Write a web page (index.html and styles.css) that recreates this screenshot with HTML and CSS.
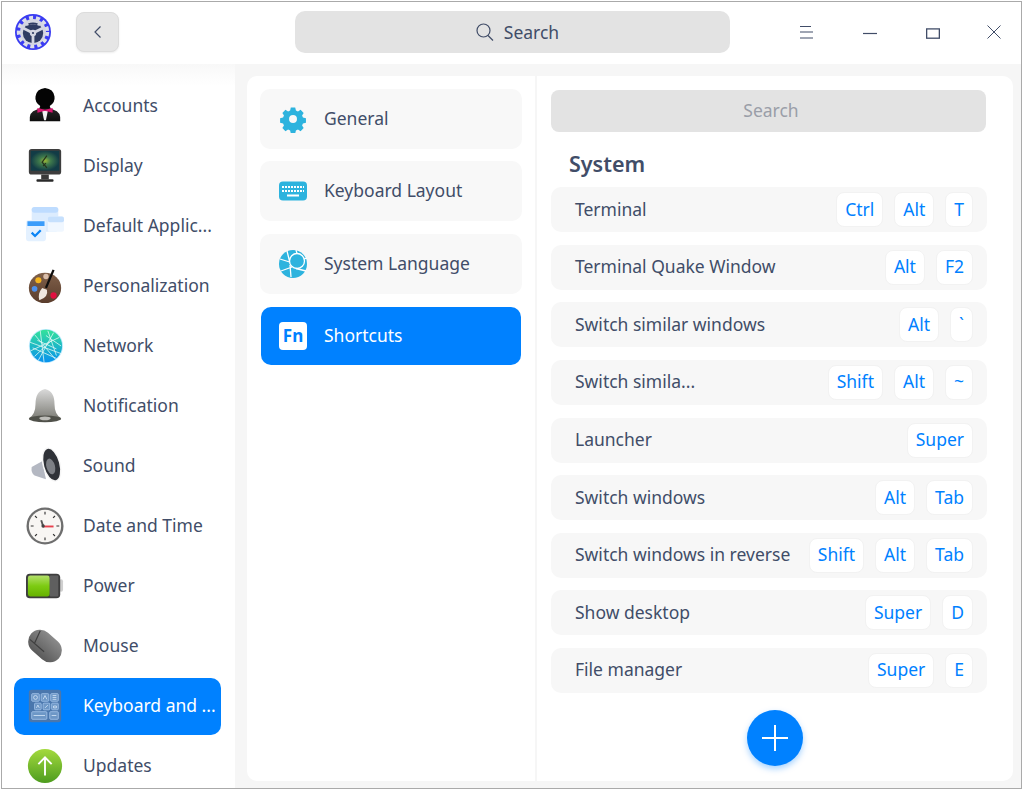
FILE: index.html
```html
<!DOCTYPE html>
<html lang="en">
<head>
<meta charset="utf-8">
<title>Control Center</title>
<link rel="stylesheet" href="styles.css">
</head>
<body>
<div class="window">
  <header class="titlebar">
    <svg class="logo" width="36" height="36" viewBox="0 0 36 36">
      <circle cx="18" cy="18" r="18" fill="#3a3cf2"/>
      <circle cx="18" cy="18" r="14.200" fill="none" stroke="#dcdee8" stroke-width="4" stroke-dasharray="4 2.950"/>
      <circle cx="18" cy="18" r="13" fill="#d4d6e2"/>
      <circle cx="18" cy="19" r="10.200" fill="#2f3c63"/>
      <path d="M18 19 8 14M18 19l10-5M18 19v11" stroke="#d4d6e2" stroke-width="2.800"/>
      <path d="M10 9q8-5 16 0l-1.500 3q-6.500-3.500-13 0z" fill="#d4d6e2"/>
      <path d="M13 9.500q5-2 10 0l-1 1.500q-4-1.400-8 0z" fill="#2f3c63"/>
      <circle cx="18" cy="19" r="3.200" fill="#d4d6e2"/>
      <circle cx="18" cy="19" r="1.100" fill="#2f3c63"/>
    </svg>
    <button class="back" aria-label="Back">
      <svg width="10" height="14" viewBox="0 0 10 14"><path d="M7.500 1.500 2 7l5.500 5.500" fill="none" stroke="#414d68" stroke-width="1.200"/></svg>
    </button>
    <div class="top-search">
      <svg width="20" height="20" viewBox="0 0 20 20"><circle cx="8.500" cy="8.500" r="6.500" fill="none" stroke="#414d68" stroke-width="1.200"/><path d="m13 13.500 5 5" stroke="#414d68" stroke-width="1.200"/></svg>
      <span>Search</span>
    </div>
    <div class="win-buttons">
      <svg width="13" height="14" viewBox="0 0 13 14"><path d="M0 1.500h11M0 7h13M0 13h13" stroke="#414d68" stroke-width="1.200"/></svg>
      <svg width="14" height="14" viewBox="0 0 14 14"><path d="M0 8.500h14" stroke="#414d68" stroke-width="1.200"/></svg>
      <svg width="14" height="14" viewBox="0 0 14 14"><rect x=".650" y="3.900" width="12.700" height="9.300" fill="none" stroke="#414d68" stroke-width="1.300"/></svg>
      <svg width="14" height="14" viewBox="0 0 14 14"><path d="m.5.500 13 13M13.500.500l-13 13" stroke="#414d68" stroke-width="1"/></svg>
    </div>
  </header>
  <div class="body">
    <nav class="sidebar">
      <div class="nav-item">
        <svg class="nav-icon" viewBox="0 0 40 40"><defs><linearGradient id="jk" x1="0" y1="0" x2="0" y2="1"><stop offset="0" stop-color="#2a2a2a"/><stop offset="1" stop-color="#0c0c0c"/></linearGradient></defs><path d="M4 36q-1-10 7-12l7-3h4l7 3q8 2 7 12z" fill="url(#jk)"/><path d="M15 20q-6-4-5-10 1-8 10-9 9 1 10 9 1 6-5 10l1 3h-12z" fill="#040404"/><path d="M17 25h6l-2 10h-2z" fill="#f0f0f0"/><path d="M12 22l8 2 8-2v5l-8-2-8 2z" fill="#d9146f"/></svg>
        <span>Accounts</span>
      </div>
      <div class="nav-item">
        <svg class="nav-icon" viewBox="0 0 40 40"><defs><radialGradient id="scr"><stop offset="0" stop-color="#9cb838"/><stop offset=".4" stop-color="#3f7a4c"/><stop offset="1" stop-color="#123c46"/></radialGradient></defs><rect x="3" y="2" width="34" height="27" rx="3" fill="#3d3d3d"/><rect x="5" y="4" width="30" height="21" fill="url(#scr)"/><path d="M22 9 17 16l5 6M18 20l3-3" fill="none" stroke="#26331d" stroke-width="1.300"/><rect x="16" y="29" width="8" height="5" fill="#3a3a3a"/><rect x="11" y="34" width="18" height="2.500" rx="1" fill="#2a2a2a"/></svg>
        <span>Display</span>
      </div>
      <div class="nav-item">
        <svg class="nav-icon" viewBox="0 0 40 40"><rect x="6" y="0" width="28" height="26" rx="3" fill="#dcecfe"/><rect x="6" y="0" width="28" height="6" rx="3" fill="#bedcff"/><rect x="23" y="10" width="17" height="16" rx="2" fill="#f0f7ff"/><rect x="23" y="10" width="17" height="6" rx="2" fill="#c6e0fd"/><rect x="0" y="14" width="21" height="22" rx="2.500" fill="#e4f1ff"/><rect x="1.500" y="15" width="18" height="5" fill="#3a9cfa"/><path d="M6 27l3.500 3.500L15.500 24.500" fill="none" stroke="#0b84f5" stroke-width="2.400"/></svg>
        <span>Default Applic...</span>
      </div>
      <div class="nav-item">
        <svg class="nav-icon" viewBox="0 0 40 40"><defs><linearGradient id="pal" x1="0" y1="0" x2="0" y2="1"><stop offset="0" stop-color="#80604a"/><stop offset="1" stop-color="#5a3d2c"/></linearGradient></defs><ellipse cx="20" cy="22" rx="17" ry="16" fill="url(#pal)"/><circle cx="13" cy="14" r="3.200" fill="#f3b31e"/><circle cx="21" cy="10" r="2.800" fill="#d9bda9"/><circle cx="9" cy="23" r="3" fill="#4d90ea"/><circle cx="29" cy="30" r="3.300" fill="#e01040"/><path d="M14 35q-2-7 3-13l5 2q2 8-8 11z" fill="#efe8e0"/><path d="M21 22 29 3" stroke="#0d0d0d" stroke-width="2.400"/></svg>
        <span>Personalization</span>
      </div>
      <div class="nav-item">
        <svg class="nav-icon" viewBox="0 0 40 40"><defs><linearGradient id="net" x1="0" y1="0" x2="0" y2="1"><stop offset="0" stop-color="#34e29a"/><stop offset="1" stop-color="#0892ee"/></linearGradient></defs><circle cx="21" cy="20" r="18" fill="#bfeaff"/><circle cx="21" cy="20" r="17" fill="url(#net)"/><path d="M9 8 31 34M5 25 35 11M15 4l4 33M29 6 13 35M4 16l33 12M21 9l16 11M9 31 27 14M12 14l20 9M23 4l9 26M7 22l25 11" stroke="#e8fbf6" stroke-width=".8" fill="none"/></svg>
        <span>Network</span>
      </div>
      <div class="nav-item">
        <svg class="nav-icon" viewBox="0 0 40 40"><defs><linearGradient id="bell" x1="0" y1="0" x2="0" y2="1"><stop offset="0" stop-color="#dadada"/><stop offset="1" stop-color="#7f7f78"/></linearGradient></defs><path d="M3 33q7-4 7-15 0-14 10-16 10 2 10 16 0 11 7 15z" fill="url(#bell)"/><ellipse cx="20" cy="33.500" rx="17" ry="3.500" fill="#50514a"/><ellipse cx="20" cy="33" rx="6" ry="2" fill="#bdbdb8"/></svg>
        <span>Notification</span>
      </div>
      <div class="nav-item">
        <svg class="nav-icon" viewBox="0 0 40 40"><path d="M17 15 6 21q-1 6 3 9l12 4z" fill="#b4b8c2"/><ellipse cx="27" cy="18.500" rx="9.500" ry="18.500" transform="rotate(-15 27 18.500)" fill="#f6f6f6"/><ellipse cx="27" cy="18.500" rx="8" ry="17" transform="rotate(-15 27 18.500)" fill="#2f3238"/><ellipse cx="26" cy="20.500" rx="4.500" ry="8.500" transform="rotate(-15 26 20.500)" fill="#7c7f85"/></svg>
        <span>Sound</span>
      </div>
      <div class="nav-item">
        <svg class="nav-icon" viewBox="0 0 40 40"><circle cx="20" cy="20" r="19.500" fill="#6e6e6e"/><circle cx="20" cy="20" r="17" fill="#f8f6f3"/><path d="M20 5v3M20 32v3M5 20h3M32 20h3M9.500 9.500l2 2M30.500 9.500l-2 2M9.500 30.500l2-2M30.500 30.500l-2-2" stroke="#333" stroke-width="1.200"/><path d="M16 14l2 6" stroke="#555" stroke-width="2"/><path d="M18 20.500h11" stroke="#e8424e" stroke-width="2"/><circle cx="18" cy="20" r="1.800" fill="#444"/></svg>
        <span>Date and Time</span>
      </div>
      <div class="nav-item">
        <svg class="nav-icon" viewBox="0 0 40 40"><defs><linearGradient id="bat" x1="0" y1="0" x2="0" y2="1"><stop offset="0" stop-color="#b3e06a"/><stop offset=".5" stop-color="#7dcb12"/><stop offset="1" stop-color="#66b200"/></linearGradient></defs><rect x="35" y="13" width="4" height="13" rx="2" fill="#cfcfcf"/><rect x="0" y="7" width="36" height="26" rx="4" fill="#3e3e3e"/><rect x="2" y="9" width="23" height="22" rx="2.500" fill="url(#bat)"/><rect x="25" y="9" width="9" height="22" rx="1" fill="#5f5f5f"/></svg>
        <span>Power</span>
      </div>
      <div class="nav-item">
        <svg class="nav-icon" viewBox="0 0 40 40"><defs><linearGradient id="ms" x1="0" y1="0" x2="0" y2="1"><stop offset="0" stop-color="#8a8a8a"/><stop offset="1" stop-color="#5a5a5a"/></linearGradient></defs><rect x=".5" y="7.500" width="39" height="25" rx="12.500" transform="rotate(42 20 20)" fill="url(#ms)"/><path d="M4 13 19 26M15 4 9 17" stroke="#3f3f3f" stroke-width="1.300" fill="none"/></svg>
        <span>Mouse</span>
      </div>
      <div class="nav-item active">
        <svg class="nav-icon" viewBox="0 0 40 40"><rect x="3" y="3" width="34" height="34" rx="3" fill="#4a77ad"/><g fill="#6d97c6" stroke="#a9c9ee" stroke-width=".8"><rect x="6" y="7" width="8" height="8" rx="1"/><rect x="16" y="7" width="8" height="8" rx="1"/><rect x="26" y="7" width="8" height="8" rx="1"/><rect x="9" y="17" width="7" height="7" rx="1"/><rect x="18" y="17" width="7" height="7" rx="1"/><rect x="27" y="17" width="7" height="7" rx="1"/><rect x="6" y="26" width="16" height="8" rx="1"/><rect x="25" y="26" width="9" height="8" rx="1"/></g><g fill="none" stroke="#dcebfb" stroke-width=".8"><circle cx="10" cy="11" r="2"/><path d="M18 13l2-4 2 4M28 9h4M28 11h4M28 13h4M11 22l1.500-3 1.500 3M20 22l3-3M29 20h3v2h-3zM8 30h12M27 30h5"/></g></svg>
        <span>Keyboard and ...</span>
      </div>
      <div class="nav-item">
        <svg class="nav-icon" viewBox="0 0 40 40"><defs><linearGradient id="upd" x1="0" y1="0" x2="0" y2="1"><stop offset="0" stop-color="#a4da3e"/><stop offset="1" stop-color="#4d9c1e"/></linearGradient></defs><circle cx="20" cy="20" r="18" fill="url(#upd)"/><path d="M20 30V11M13 18l7-7 7 7" fill="none" stroke="#fff" stroke-width="2"/></svg>
        <span>Updates</span>
      </div>
    </nav>
    <main class="panel">
      <section class="middle">
        <div class="sub-item">
          <svg width="28" height="28" viewBox="0 0 28 28"><path fill-rule="evenodd" fill="#2db3de" d="M11.500 1h5l.8 3.400 2.300 1 3-1.800 3.500 3.500-1.800 3 1 2.300 3.400.8v5l-3.400.8-1 2.300 1.800 3-3.500 3.500-3-1.800-2.300 1-.8 3.400h-5l-.8-3.400-2.300-1-3 1.800-3.500-3.500 1.800-3-1-2.300-3.400-.8v-5l3.400-.8 1-2.300-1.800-3 3.500-3.500 3 1.800 2.300-1zM14 9.500a4.500 4.500 0 1 0 0 9 4.500 4.500 0 0 0 0-9z" transform="translate(1.700 1.700) scale(.88)"/></svg>
          <span>General</span>
        </div>
        <div class="sub-item">
          <svg width="28" height="28" viewBox="0 0 28 28"><rect y="4.500" width="28" height="19" rx="4" fill="#2db3de"/><path d="M3 10h22M3 14h22" stroke="#fff" stroke-width="2" stroke-dasharray="2 1"/><path d="M8 18.500h12" stroke="#fff" stroke-width="2"/></svg>
          <span>Keyboard Layout</span>
        </div>
        <div class="sub-item">
          <svg width="28" height="28" viewBox="0 0 28 28"><circle cx="14" cy="14" r="14" fill="#2db3de"/><g fill="none" stroke="#fff" stroke-width="1.300"><circle cx="18" cy="11" r="7.500"/><path d="M10.500 12 1 9M10.500 11 8 1M11 15l1 12M13 17 2 21M17 18.500 27 21M18 3.500 17 0M25 9l3-1"/></g></svg>
          <span>System Language</span>
        </div>
        <div class="sub-item active">
          <span class="fn">Fn</span>
          <span>Shortcuts</span>
        </div>
      </section>
      <section class="right">
        <div class="search-box">Search</div>
        <h2>System</h2>
        <div class="rows">
          <div class="row"><span class="row-label">Terminal</span><span class="key">Ctrl</span><span class="key">Alt</span><span class="key">T</span></div>
          <div class="row"><span class="row-label">Terminal Quake Window</span><span class="key">Alt</span><span class="key">F2</span></div>
          <div class="row"><span class="row-label">Switch similar windows</span><span class="key">Alt</span><span class="key">`</span></div>
          <div class="row"><span class="row-label">Switch simila...</span><span class="key">Shift</span><span class="key">Alt</span><span class="key">~</span></div>
          <div class="row"><span class="row-label">Launcher</span><span class="key">Super</span></div>
          <div class="row"><span class="row-label">Switch windows</span><span class="key">Alt</span><span class="key">Tab</span></div>
          <div class="row"><span class="row-label">Switch windows in reverse</span><span class="key">Shift</span><span class="key">Alt</span><span class="key">Tab</span></div>
          <div class="row"><span class="row-label">Show desktop</span><span class="key">Super</span><span class="key">D</span></div>
          <div class="row"><span class="row-label">File manager</span><span class="key">Super</span><span class="key">E</span></div>
        </div>
        <button class="add" aria-label="Add">
          <svg width="26" height="26" viewBox="0 0 26 26"><path d="M13 0v26M0 13h26" stroke="#fff" stroke-width="2"/></svg>
        </button>
      </section>
    </main>
  </div>
</div>
</body>
</html>
```
FILE: styles.css
```css
* { box-sizing: border-box; }
html, body { margin: 0; background: #fff; }
body { padding: 1px; height: 792px; overflow: hidden; font-family: "Noto Sans", sans-serif; font-size: 17.500px; color: #414d68; }
.window { width: 1021px; height: 788px; border: 1px solid #aaa; display: flex; flex-direction: column; overflow: hidden; background: #fff; }
.titlebar { height: 62px; flex: none; display: flex; align-items: center; padding: 0 0 0 13px; background: #fff; }
.logo { flex: none; margin-bottom: 2px; }
.back { width: 43px; height: 40px; margin: 0 0 2px 25px; padding: 0; border: 1px solid #dcdcdc; border-radius: 8px; background: #e6e6e6; display: flex; align-items: center; justify-content: center; box-shadow: 0 1px 2px rgba(0,0,0,.08); }
.top-search { width: 435px; height: 42px; margin: 0 0 2px 176px; padding-left: 9px; border-radius: 10px; background: #e3e3e3; display: flex; align-items: center; justify-content: center; gap: 9px; }
.win-buttons { display: grid; grid-template-columns: 63px 63px 61px 14px; align-items: center; margin: 0 0 2px 70px; }
.body { flex: 1; min-height: 0; display: flex; background: #f6f6f6; }
.sidebar { width: 233px; flex: none; display: flex; flex-direction: column; gap: 3px; padding: 13.500px 14px 0 12px; overflow: hidden; background: linear-gradient(#f8f8f8, #fff 22px); }
.nav-item { height: 57px; flex: none; display: flex; align-items: center; gap: 19px; padding-left: 12px; border-radius: 10px; white-space: nowrap; }
.nav-item > span, .sub-item > span:not(.fn) { margin-bottom: 2px; }
.nav-icon { width: 38px; height: 38px; flex: none; }
.nav-item.active { background: #0081ff; color: #fff; }
.panel { flex: 1; display: flex; margin: 12px 8px 7px 12px; min-width: 0; border-radius: 10px; background: #fff; overflow: hidden; }
.middle { flex: none; display: flex; flex-direction: column; padding: 12.500px 13px 0; gap: 12.500px; border-right: 2px solid #f6f6f6; width: 290px; }
.sub-item { height: 60px; flex: none; display: flex; align-items: center; gap: 17px; padding-left: 19px; border-radius: 10px; background: #f8f8f8; }
.sub-item.active { margin: 1px 1px 0; height: 58px; padding-left: 18px; background: #0081ff; color: #fff; }
.fn { width: 28px; height: 28px; border-radius: 4px; background: #fff; color: #0081ff; font-weight: 700; font-size: 17px; line-height: 28px; text-align: center; }
.right { flex: 1; min-width: 0; position: relative; display: flex; flex-direction: column; padding: 14px 26px 0 14px; }
.search-box { height: 42px; flex: none; width: 435px; padding: 0 0 2px 5px; border-radius: 8px; background: #e3e3e3; color: #9a9ea8; display: flex; align-items: center; justify-content: center; }
h2 { margin: 18px 0 10.200px 18px; font-size: 21.500px; line-height: 27px; font-weight: 600; }
.rows { display: flex; flex-direction: column; gap: 12.600px; width: 436px; }
.row { height: 45px; flex: none; display: flex; align-items: center; gap: 11px; padding: 0 14px 0 24px; border-radius: 10px; background: #f7f7f7; }
.row-label { margin: 0 auto 2px 0; white-space: nowrap; }
.key { height: 35px; flex: none; padding: 0 8px 2px; display: flex; align-items: center; border-radius: 8px; background: #fff; color: #0081ff; border: 1px solid #f2f2f2; }
.add { position: absolute; left: 210px; top: 634px; width: 56px; height: 56px; padding: 0; border: 0; border-radius: 50%; background: #0081ff; display: flex; align-items: center; justify-content: center; box-shadow: 0 3px 6px rgba(0,129,255,.35); }
```
